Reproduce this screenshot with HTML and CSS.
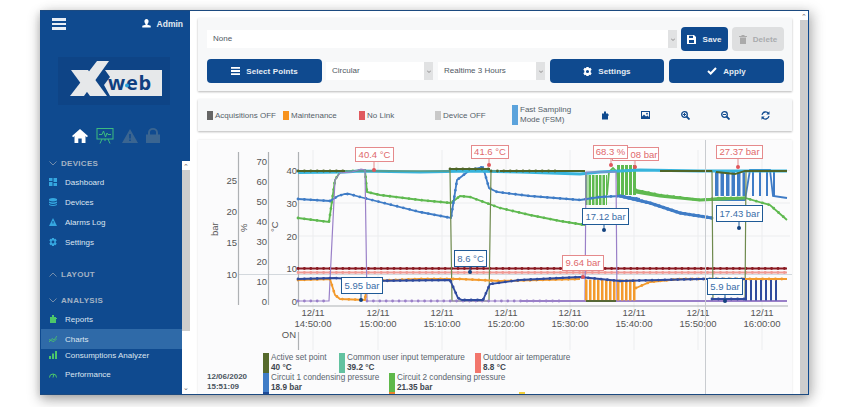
FILE: index.html
```html
<!DOCTYPE html>
<html lang="en">
<head>
<meta charset="utf-8">
<title>XWeb Charts</title>
<link rel="stylesheet" href="styles.css">
</head>
<body>
<div class="window">
  <aside class="sidebar">
    <div class="side-top">
      <div class="side-head">
        <div class="burger"><i></i><i></i><i></i></div>
        <div class="admin">
          <svg class="ic" width="9" height="9" viewBox="0 0 10 10"><path fill="#fff" d="M5 0a2.4 2.4 0 0 1 2.2 3.2C7 4.500 6.400 5.200 6 5.500V6.300L9.700 7.500V9.500H.3V7.500L4 6.300V5.500C3.600 5.200 3 4.500 2.800 3.200A2.400 2.400 0 0 1 5 0z"/></svg>
          <span>Admin</span>
        </div>
      </div>
      <div class="logo">
        <svg width="112" height="48" viewBox="58 56 112 48">
          <path class="logo-light" d="M105 69H162V95H110L104 84L110 76z"/>
          <path class="logo-light" d="M71 69H88L107 95H90z"/>
          <path class="logo-light" d="M97 60H109L84 95H70z"/>
          <text class="logo-text" x="108" y="89">web</text>
          <circle class="logo-dot" cx="127" cy="84.500" r="2"/>
        </svg>
      </div>
      <div class="quick">
        <svg width="16" height="14" viewBox="0 0 16 14"><path fill="#fff" d="M8 0L16 7L14.800 8.200L13.500 7.100V14H9.700V9.500H6.300V14H2.500V7.100L1.200 8.200L0 7z"/></svg>
        <svg width="18" height="16" viewBox="0 0 18 16"><g fill="none" stroke="#3dbb7f" stroke-width="1"><rect x="1" y=".5" width="16" height="10.500"/><path d="M3 6.500H6L7.500 3L9.500 9L11 5L12 6.500H15M6 11L4 15.500M12 11L14 15.500M9 11V13"/></g></svg>
        <svg width="16" height="14" viewBox="0 0 16 14"><path fill="#3a6591" d="M8 0L16 14H0zM7.200 5V9.500H8.800V5zM7.200 10.500V12H8.800V10.500z"/></svg>
        <svg width="14" height="15" viewBox="0 0 14 15"><path fill="#3a6591" d="M0 6.500H2V4.500A5 4.500 0 0 1 12 4.500V6.500H14V15H0zM4 6.500H10V4.500A3 2.800 0 0 0 4 4.500z"/></svg>
      </div>
    </div>
    <div class="side-body">
      <nav class="nav">
        <div class="nav-head"><svg width="8" height="5" viewBox="0 0 8 5"><path class="chev" d="M.5.500L4 4L7.500.500"/></svg>DEVICES</div>
        <a class="nav-item"><svg width="8" height="8" viewBox="0 0 8 8"><path fill="#35a7e0" d="M0 0H3.500V3H0zM4.500 0H8V4H4.500zM0 4H3.500V8H0zM4.500 5H8V8H4.500z"/></svg>Dashboard</a>
        <a class="nav-item"><svg width="8" height="8" viewBox="0 0 8 8"><path fill="#35a7e0" d="M0 1Q4-1 8 1V2.500Q4 4.500 0 2.500zM0 3.500Q4 5.500 8 3.500V5Q4 7 0 5zM0 6Q4 8 8 6V7Q4 9 0 7z"/></svg>Devices</a>
        <a class="nav-item"><svg width="8" height="8" viewBox="0 0 8 8"><path fill="#35a7e0" d="M4 0L8 8H0zM3.500 3V5.500H4.500V3z"/></svg>Alarms Log</a>
        <a class="nav-item"><svg width="8" height="8" viewBox="0 0 8 8"><path fill="#35a7e0" fill-rule="evenodd" d="M3 0H5L5.300 1.200L6.600 .7L7.700 2.400L6.800 3.300V4.700L7.700 5.600L6.600 7.300L5.300 6.800L5 8H3L2.700 6.800L1.400 7.300L.3 5.600L1.200 4.700V3.300L.3 2.400L1.400 .7L2.700 1.200zM4 2.600A1.400 1.400 0 1 0 4 5.400A1.400 1.400 0 1 0 4 2.600z"/></svg>Settings</a>
        <div class="nav-head nav-head-layout"><svg width="8" height="5" viewBox="0 0 8 5"><path class="chev" d="M.5 4.500L4 1L7.500 4.500"/></svg>LAYOUT</div>
        <div class="nav-head nav-head-analysis"><svg width="8" height="5" viewBox="0 0 8 5"><path class="chev" d="M.5.500L4 4L7.500.500"/></svg>ANALYSIS</div>
        <a class="nav-item"><svg width="8" height="8" viewBox="0 0 8 8"><path fill="#4cc76a" d="M1 2H3V0H5V2H7V8H1zM7 3H8V4H7z"/></svg>Reports</a>
        <a class="nav-item nav-active"><svg width="8" height="8" viewBox="0 0 8 8"><path fill="none" stroke="#4cc76a" stroke-width=".8" d="M0 7L3 3.500L5 5L8 1M0 4.500L3 6L5 6.500L8 3.500"/></svg>Charts</a>
        <a class="nav-item nav-short"><svg width="8" height="8" viewBox="0 0 8 8"><path fill="#4cc76a" d="M0 5H2V8H0zM3 2.500H5V8H3zM6 0H8V8H6z"/></svg>Consumptions Analyzer</a>
        <a class="nav-item nav-last"><svg width="8" height="7" viewBox="0 0 8 7"><path fill="none" stroke="#4cc76a" stroke-width="1" d="M.5 6.500A3.500 3.500 0 0 1 7.500 6.500M4 6.500L5 3"/></svg>Performance</a>
      </nav>
      <div class="scrollbar side-scroll">
        <span class="sb-up">⌃</span><div class="sb-thumb side-thumb"></div><span class="sb-down">⌄</span>
      </div>
    </div>
  </aside>

  <main class="main">
    <div class="content">
      <section class="panel panel-form">
        <div class="form-row">
          <div class="select select-wide"><span class="select-value">None</span><span class="select-arrow"><svg width="4" height="3" viewBox="0 0 4 3"><path class="arrow" d="M0 .5L2 2.500L4 .5"/></svg></span></div>
          <button class="btn btn-save"><svg width="9" height="9" viewBox="0 0 9 9"><path fill="#fff" d="M0 0H7L9 2V9H0zM2 .8V3H6V.8zM2 5V8H7V5z"/></svg>Save</button>
          <button class="btn btn-delete"><svg width="8" height="9" viewBox="0 0 8 9"><path fill="#aaa" d="M0 1H2.500V0H5.500V1H8V2H0zM1 2.500H7V9H1z"/></svg>Delete</button>
        </div>
        <div class="form-row form-row-2">
          <button class="btn btn-select"><svg width="9" height="8" viewBox="0 0 9 8"><path fill="#fff" d="M0 0H9V1.800H0zM0 3.100H9V4.900H0zM0 6.200H9V8H0z"/></svg>Select Points</button>
          <div class="select select-mid"><span class="select-value">Circular</span><span class="select-arrow"><svg width="4" height="3" viewBox="0 0 4 3"><path class="arrow" d="M0 .5L2 2.500L4 .5"/></svg></span></div>
          <div class="select select-mid"><span class="select-value">Realtime 3 Hours</span><span class="select-arrow"><svg width="4" height="3" viewBox="0 0 4 3"><path class="arrow" d="M0 .5L2 2.500L4 .5"/></svg></span></div>
          <button class="btn btn-settings"><svg width="9" height="9" viewBox="0 0 8 8"><path fill="#fff" fill-rule="evenodd" d="M3 0H5L5.300 1.200L6.600 .7L7.700 2.400L6.800 3.300V4.700L7.700 5.600L6.600 7.300L5.300 6.800L5 8H3L2.700 6.800L1.400 7.300L.3 5.600L1.200 4.700V3.300L.3 2.400L1.400 .7L2.700 1.200zM4 2.600A1.400 1.400 0 1 0 4 5.400A1.400 1.400 0 1 0 4 2.600z"/></svg>Settings</button>
          <button class="btn btn-apply"><svg width="10" height="8" viewBox="0 0 10 8"><path fill="none" stroke="#fff" stroke-width="2" d="M1 4L3.700 6.500L9 1"/></svg>Apply</button>
        </div>
      </section>

      <section class="panel panel-status">
        <div class="status"><i class="sw sw-grey"></i>Acquisitions OFF</div>
        <div class="status"><i class="sw sw-orange"></i>Maintenance</div>
        <div class="status"><i class="sw sw-red"></i>No Link</div>
        <div class="status"><i class="sw sw-light"></i>Device OFF</div>
        <div class="status status-fsm"><i class="sw sw-blue"></i><span>Fast Sampling<br>Mode (FSM)</span></div>
        <div class="tool"><svg width="8" height="9" viewBox="0 0 8 8"><path fill="#0f4a8f" d="M1 2H3V0H5V2H7V8H1zM7 3H8V4H7z"/></svg></div>
        <div class="tool"><svg width="9" height="8" viewBox="0 0 9 8"><path fill="#0f4a8f" fill-rule="evenodd" d="M0 0H9V8H0zM1 1V5.500L3 3.500L5 5.500L6.500 4.500L8 6V1zM6 1.800A.9.9 0 1 0 6 3.600A.9.9 0 1 0 6 1.800z"/></svg></div>
        <div class="tool"><svg width="9" height="9" viewBox="0 0 9 9"><circle cx="3.500" cy="3.500" r="2.800" fill="none" stroke="#0f4a8f" stroke-width="1.300"/><path stroke="#0f4a8f" stroke-width="1.800" d="M5.500 5.500L8.500 8.500"/><path stroke="#0f4a8f" d="M2 3.500H5M3.500 2V5"/></svg></div>
        <div class="tool"><svg width="9" height="9" viewBox="0 0 9 9"><circle cx="3.500" cy="3.500" r="2.800" fill="none" stroke="#0f4a8f" stroke-width="1.300"/><path stroke="#0f4a8f" stroke-width="1.800" d="M5.500 5.500L8.500 8.500"/><path stroke="#0f4a8f" d="M2 3.500H5"/></svg></div>
        <div class="tool"><svg width="9" height="9" viewBox="0 0 9 9"><path fill="none" stroke="#0f4a8f" stroke-width="1.300" d="M1 3.800A3.600 3.600 0 0 1 7.500 2.500M8 5.200A3.600 3.600 0 0 1 1.500 6.500"/><path fill="#0f4a8f" d="M8.500 .3V3.500H5.300zM.5 8.700V5.500H3.700z"/></svg></div>
      </section>

      <section class="panel-chart">
        <svg class="chart" width="594" height="210" viewBox="198 140 594 210">
          <defs>
            <path id="s-cyan" d="M298 172.500L345 172L360 171L420 172L470 171L520 172L580 174L600 172L640 170L700 171L787 171"/>
            <path id="s-olive" d="M298 171H450L452 301H489L491 171H585M700 171H712L713 301H745L746 171H787"/>
            <path id="s-olive-dots" d="M298 171H345M450 169H490M491 171H560"/>
            <path id="s-purple" d="M298 301H329L335 180L340 173L352 172L361 169L365 170L367 301H585L586 172H616L617 301H787"/>
            <path id="s-purple-dots" d="M298 301H329M367 301H560"/>
            <path id="s-blue" d="M298 199L330 201L338 196L345 194L349 194L360 197L420 212L451 218L457 180L470 170L483 167L489 188L497 192L530 196L580 200L600 197L620 196L640 199"/>
            <path id="s-navyblue" d="M620 196L650 203L680 213L712 218"/>
            <path id="s-lblue" d="M712 200H745L750 170H770L773 196L787 198"/>
            <path id="s-green" d="M298 218L329 222L335 180L340 172L365 170L367 192L380 195L420 200L451 203L460 196L470 197L500 208L530 215L560 221L585 225M636 190L660 195L700 200L720 198L745 198L770 205L787 220"/>
            <path id="s-darkred" d="M298 268.500H787"/>
            <path id="s-pink" d="M298 272.500H787"/>
            <path id="s-orange" d="M298 280L330 279L335 295L340 299L365 300L367 281L420 279L460 279L500 281L580 279M636 288L650 282L680 279L787 279"/>
            <path id="s-navy" d="M298 279L335 278L365 280L367 281L450 280L458 298L462 300L483 300L490 284L520 280L580 277L600 279L620 281L700 279L745 279M712 299H745"/>
          </defs>

          <g class="grid">
            <path d="M313 150V350M378 150V350M442 150V350M506 150V350M570 150V350M634 150V350M698 150V350M762 150V350"/>
            <path d="M299 170.500H790M299 203H790M299 236H790"/>
          </g>
          <path class="cross" d="M238 274.500H795"/>
          <path class="axis" d="M238.500 152V305M268.500 152V305M298.500 152V306H788M298.500 332V350"/>

          <g class="tick tick-end">
            <text x="237" y="184">25</text><text x="237" y="215">20</text><text x="237" y="246">15</text><text x="237" y="278">10</text>
            <text x="267" y="165">70</text><text x="267" y="185">60</text><text x="267" y="205">50</text><text x="267" y="225">40</text><text x="267" y="245">30</text><text x="267" y="265">20</text><text x="267" y="285">10</text><text x="267" y="305">0</text>
            <text x="297" y="174">40</text><text x="297" y="207">30</text><text x="297" y="240">20</text><text x="297" y="272">10</text><text x="297" y="305">0</text>
            <text x="296" y="338">ON</text>
          </g>
          <text class="tick" transform="translate(218 236) rotate(-90)">bar</text>
          <text class="tick" transform="translate(247 232) rotate(-90)">%</text>
          <text class="tick" transform="translate(278 232) rotate(-90)">°C</text>
          <g class="tick tick-mid">
            <text x="313" y="316">12/11</text><text x="313" y="327">14:50:00</text>
            <text x="378" y="316">12/11</text><text x="378" y="327">15:00:00</text>
            <text x="442" y="316">12/11</text><text x="442" y="327">15:10:00</text>
            <text x="506" y="316">12/11</text><text x="506" y="327">15:20:00</text>
            <text x="570" y="316">12/11</text><text x="570" y="327">15:30:00</text>
            <text x="634" y="316">12/11</text><text x="634" y="327">15:40:00</text>
            <text x="698" y="316">12/11</text><text x="698" y="327">15:50:00</text>
            <text x="762" y="316">12/11</text><text x="762" y="327">16:00:00</text>
          </g>

          <use href="#s-darkred" class="line thick c-darkred"/><use href="#s-darkred" class="dots c-darkred"/>
          <use href="#s-pink" class="line thick c-pink"/><use href="#s-pink" class="dots c-pink"/>
          <use href="#s-green" class="line thick c-green"/><use href="#s-green" class="dots c-green"/>
          <path class="bars c-green" d="M585 190H607"/>
          <path class="bars-tall c-green" d="M617 180H636"/>
          <path class="line thick c-green" d="M607 195L609 172L613 168L617 172L619 195"/>
          <use href="#s-blue" class="line thick c-blue"/><use href="#s-blue" class="dots c-blue"/>
          <use href="#s-navyblue" class="line thicker c-blue"/><use href="#s-navyblue" class="dots big c-blue"/>
          <use href="#s-lblue" class="line thick c-blue"/><path class="bars-blue c-blue" d="M715 183H745"/><path class="bars-sparse c-blue" d="M752 183H780"/>
          <path class="green-low c-green" d="M636 192L660 196L700 200L745 198"/>
          <use href="#s-cyan" class="line thicker c-cyan"/>
          <use href="#s-olive" class="line c-olive"/><path class="line thick c-dkolive" d="M298 171H345M450 169H490M500 171H585M660 171H712M716 172L735 174L745 171H787"/>
          <use href="#s-olive-dots" class="dots c-dkolive"/>
          <use href="#s-purple" class="line c-purple"/><use href="#s-purple-dots" class="dots c-purple"/>
          <path class="line thick c-purple" d="M520 301H787"/>
          <path class="bars-orange c-orange" d="M585 290H636"/>
          <path class="bars-navy c-indigo" d="M745 290H780"/>
          <use href="#s-orange" class="line thick c-orange"/><use href="#s-orange" class="dots c-orange"/>
          <use href="#s-navy" class="line thick c-indigo"/><use href="#s-navy" class="dots c-indigo"/>
          <path class="line thick c-dkolive" d="M586 301H616"/>

          <g class="tip tip-red">
            <path d="M374 161V170"/><rect x="355.500" y="147.500" width="38" height="14"/><text x="374.500" y="158">40.4 °C</text><circle cx="374" cy="170" r="2"/>
            <path d="M489 158V165"/><rect x="471.500" y="145.500" width="37" height="13"/><text x="490" y="155">41.6 °C</text><circle cx="489" cy="165" r="2"/>
            <path d="M635 160V167"/><rect x="612.500" y="147.500" width="46" height="13"/><text x="644" y="157.500">08 bar</text><circle cx="635" cy="167" r="2"/>
            <path d="M611 158V165"/><rect x="593.500" y="145.500" width="34" height="13"/><text x="610.500" y="155">68.3 %</text><circle cx="611" cy="165" r="2"/>
            <path d="M738 158V167"/><rect x="716.500" y="145.500" width="46" height="13"/><text x="739.500" y="155">27.37 bar</text><circle cx="738" cy="167" r="2"/>
            <path d="M583 270V277"/><rect x="562.500" y="255.500" width="41" height="15"/><text x="583" y="266">9.64 bar</text><circle cx="583" cy="277" r="2"/>
          </g>
          <g class="tip tip-blue">
            <path d="M361 293V300"/><rect x="341.500" y="277.500" width="41" height="16"/><text x="362" y="289">5.95 bar</text><circle cx="361" cy="300" r="2"/>
            <path d="M470 266V272"/><rect x="454.500" y="250.500" width="32" height="16"/><text x="470.500" y="262">8.6 °C</text><circle cx="470" cy="272" r="2"/>
            <path d="M604 224V230"/><rect x="582.500" y="208.500" width="46" height="16"/><text x="605.500" y="220">17.12 bar</text><circle cx="604" cy="230" r="2"/>
            <path d="M739 221V228"/><rect x="716.500" y="205.500" width="46" height="16"/><text x="739.500" y="217">17.43 bar</text><circle cx="739" cy="228" r="2"/>
            <path d="M725 294V301"/><rect x="707.500" y="278.500" width="35" height="16"/><text x="725" y="290">5.9 bar</text><circle cx="725" cy="301" r="2"/>
          </g>
        </svg>

        <div class="legend">
          <div class="legend-time">12/06/2020<br>15:51:09</div>
          <div class="legend-rows">
            <div class="legend-row">
              <div class="li li-76"><i class="ls ls-olive"></i><span>Active set point<br><b>40 °C</b></span></div>
              <div class="li li-136"><i class="ls ls-mint"></i><span>Common user input temperature<br><b>39.2 °C</b></span></div>
              <div class="li"><i class="ls ls-salmon"></i><span>Outdoor air temperature<br><b>8.8 °C</b></span></div>
            </div>
            <div class="legend-row">
              <div class="li li-126"><i class="ls ls-blue"></i><span>Circuit 1 condensing pressure<br><b>18.9 bar</b></span></div>
              <div class="li"><i class="ls ls-green"></i><span>Circuit 2 condensing pressure<br><b>21.35 bar</b></span></div>
            </div>
            <div class="legend-row">
              <div class="li li-126"><i class="ls ls-navy"></i></div>
              <div class="li li-130"><i class="ls ls-orange"></i></div>
              <div class="li"><i class="ls ls-yellow"></i></div>
            </div>
          </div>
        </div>
        <div class="crosshair"></div>
      </section>
    </div>
    <div class="scrollbar main-scroll">
      <span class="sb-up">⌃</span><div class="sb-thumb main-thumb"></div>
    </div>
  </main>
</div>
</body>
</html>
```

FILE: styles.css
```css
* { box-sizing: border-box; }
html, body { margin: 0; padding: 0; background: #fff; overflow: hidden; }
body { width: 847px; height: 407px; font-family: "Liberation Sans", Arial, sans-serif; color: #4a5560; }

.window {
  display: flex;
  width: 769px;
  height: 385px;
  margin: 10px 0 0 40px;
  background: #fff;
  border-top: 1px solid #1c4a80;
  border-right: 1px solid #0f4a8f;
  border-bottom: 1px solid #1c4a80;
  box-shadow: 0 5px 12px rgba(0, 0, 0, .3), 6px 0 12px rgba(0, 0, 0, .1), -2px 2px 6px rgba(0, 0, 0, .06);
  overflow: hidden;
}

/* sidebar */
.sidebar { width: 150px; flex: none; display: flex; flex-direction: column; background: #0f4a8f; color: #dfe7f0; }
.side-top { height: 139px; flex: none; }
.side-head { display: flex; justify-content: space-between; align-items: center; padding: 7px 7px 0 12px; }
.burger { display: grid; gap: 2px; width: 14px; }
.burger i { display: block; height: 2.500px; background: #e8eef5; }
.admin { display: flex; align-items: center; gap: 6px; font-size: 8.500px; font-weight: 700; color: #e3eaf2; }
.ic { display: block; }
.logo { width: 112px; height: 48px; margin: 27px 0 0 18px; background: #0e4486; }
.logo svg { display: block; }
.logo-light { fill: #e6e8ea; }
.logo-text { font-family: "Open Sans", "Liberation Sans", sans-serif; font-size: 20px; font-weight: 700; letter-spacing: .8px; fill: #0f3f80; }
.logo-dot { fill: #2a9fd8; }
.quick { display: flex; align-items: center; gap: 8px; padding: 23px 0 0 32px; }
.quick svg { display: block; flex: none; }
.side-body { flex: 1; display: flex; min-height: 0; }
.nav { flex: 1; padding-top: 4px; font-size: 8px; }
.nav-head { display: flex; align-items: center; gap: 4px; height: 18px; padding-left: 9px; font-weight: 700; letter-spacing: .3px; color: #a3b2c4; }
.nav-head-layout { margin-top: 13px; }
.nav-head-analysis { margin-top: 8px; }
.chev { fill: none; stroke: #7f95ae; stroke-width: .9; }
.nav-item { display: flex; align-items: center; gap: 8px; height: 20px; padding-left: 8px; color: #dce5ef; margin-left: 1px; }
.nav-active { background: #2f6aa8; }
.nav-short { height: 12px; }
.nav-last { margin-top: 3px; }
.scrollbar { flex: none; background: #fff; display: flex; flex-direction: column; align-items: center; font-size: 7px; color: #666; }
.side-scroll { width: 8px; margin-top: 11px; }
.sb-up { height: 9px; line-height: 11px; }
.sb-down { margin-top: auto; height: 9px; line-height: 6px; }
.sb-thumb { width: 100%; background: #cdcdcd; }
.side-thumb { height: 161px; }

/* main */
.main { flex: 1; display: flex; min-width: 0; }
.content { flex: 1; padding: 7px 8px 0; min-width: 0; }
.main-scroll { width: 8px; }
.main-thumb { height: 375px; }
.panel { background: #f7f8f9; box-shadow: 0 1px 2px rgba(0, 0, 0, .28); }
.panel-form { height: 73px; padding: 9px 8px 0 9px; }
.form-row { display: flex; height: 24px; gap: 4px; align-items: center; }
.form-row-2 { margin-top: 8px; gap: 5px; }
.select { display: flex; height: 18px; font-size: 8px; color: #4f5963; }
.select-wide { flex: 1; }
.select-mid { width: 107px; }
.select-value { flex: 1; background: #fff; line-height: 18px; padding-left: 6px; }
.select-arrow { width: 9px; flex: none; background: #e1e2e3; display: flex; align-items: center; justify-content: center; }
.arrow { fill: none; stroke: #777; stroke-width: .8; }
.btn { display: flex; align-items: center; justify-content: center; gap: 6px; height: 24px; border: 0; border-radius: 4px; padding: 0; background: #0f4a8f; color: #e6edf5; font: 700 8px "Liberation Sans", Arial, sans-serif; letter-spacing: .1px; }
.btn svg { flex: none; display: block; }
.btn-save { width: 47px; }
.btn-delete { width: 52px; background: #dedfe0; color: #a9abae; }
.btn-select { width: 115px; margin-right: -1px; }
.btn-settings { width: 114px; }
.btn-apply { width: 115px; }
.panel-status { display: flex; align-items: center; height: 32px; margin-top: 8px; padding-left: 9px; font-size: 8px; color: #555f69; }
.status { display: flex; align-items: center; gap: 2px; width: 76px; flex: none; }
.status-fsm { width: 73px; margin-left: 1px; line-height: 10px; }
.sw { display: block; flex: none; width: 6px; height: 9px; }
.sw-grey { background: #666; }
.sw-orange { background: #f7931e; }
.sw-red { background: #e05a5f; }
.sw-light { background: #c9c9c9; }
.sw-blue { height: 20px; background: #5ba3dc; }
.tool { width: 40px; flex: none; display: flex; justify-content: center; }
.tool svg { display: block; }

/* chart */
.panel-chart { position: relative; margin-top: 9px; height: 255px; background: #fbfbfc; box-shadow: 0 0 2px rgba(0, 0, 0, .12); overflow: hidden; }
.chart { display: block; font-family: "Liberation Sans", Arial, sans-serif; }
.grid path { fill: none; stroke: #ecedef; stroke-width: 1; }
.cross { fill: none; stroke: #d3d8dd; stroke-width: 1; }
.axis { fill: none; stroke: #aeb1b4; stroke-width: 1.200; }
.tick { font-size: 9.500px; fill: #555; }
.tick-end { text-anchor: end; }
.tick-mid { text-anchor: middle; }
.line { fill: none; stroke-width: 1.200; }
.line.thick { stroke-width: 1.800; }
.line.thicker { stroke-width: 3; }
.dots { fill: none; stroke-width: 2.800; stroke-linecap: round; stroke-dasharray: 0 6.400; }
.dots.big { stroke-width: 3.500; stroke-dasharray: 0 4.500; }
.bars { fill: none; stroke-width: 30; stroke-dasharray: 2.500 1; }
.bars-tall { fill: none; stroke-width: 30; stroke-dasharray: 3 1; }
.bars-blue { fill: none; stroke-width: 26; stroke-dasharray: 3.500 2; }
.bars-sparse { fill: none; stroke-width: 26; stroke-dasharray: 2 5; }
.green-low { fill: none; stroke-width: 3; }
.bars-orange { fill: none; stroke-width: 21; stroke-dasharray: 2.500 1.500; }
.bars-navy { fill: none; stroke-width: 21; stroke-dasharray: 2 3; }
.c-cyan { stroke: #37b4dc; }
.c-olive { stroke: #6f8a4e; }
.c-dkolive { stroke: #4f6528; }
.c-purple { stroke: #9a80c8; }
.c-blue { stroke: #3f7cc6; }
.c-green { stroke: #5fb950; }
.c-darkred { stroke: #8a1a22; }
.c-pink { stroke: #f09a94; }
.c-orange { stroke: #f39a2c; }
.c-indigo { stroke: #2f4b9e; }
.tip { font-size: 9.500px; text-anchor: middle; }
.tip rect { fill: #fff; stroke-width: 1; }
.tip path { fill: none; stroke-width: 1; }
.tip-red rect, .tip-red path { stroke: #e58a8c; }
.tip-red text { fill: #e0696c; }
.tip-red circle { fill: #e0565b; }
.tip-blue rect, .tip-blue path { stroke: #1f5a96; }
.tip-blue text { fill: #3a6ea8; }
.tip-blue circle { fill: #12427f; }
.crosshair { position: absolute; left: 507px; top: 0; bottom: 0; width: 1px; background: #c9ccd0; }
.legend { display: flex; height: 45px; padding-top: 3px; font-size: 8.200px; color: #5a646e; overflow: hidden; }
.legend-time { width: 65px; flex: none; padding: 19px 0 0 9px; line-height: 10px; font-weight: 700; color: #4a5560; font-size: 8px; }
.legend-rows { flex: 1; display: grid; grid-auto-rows: 19.500px; }
.legend-row { display: flex; }
.li { display: flex; gap: 2px; line-height: 10px; white-space: nowrap; }
.li b { color: #3e4750; }
.li-76 { width: 76px; }
.li-136 { width: 136px; }
.li-126 { width: 126px; }
.li-130 { width: 130px; }
.ls { display: block; flex: none; width: 6px; height: 19.500px; }
.ls-olive { background: #566a2c; }
.ls-mint { background: #63c2a0; }
.ls-salmon { background: #f2766c; }
.ls-blue { background: #3f7cc6; }
.ls-green { background: #5fb84a; }
.ls-navy { background: #1f4a96; }
.ls-orange { background: #e8832a; }
.ls-yellow { background: #f3cf3a; }
```
